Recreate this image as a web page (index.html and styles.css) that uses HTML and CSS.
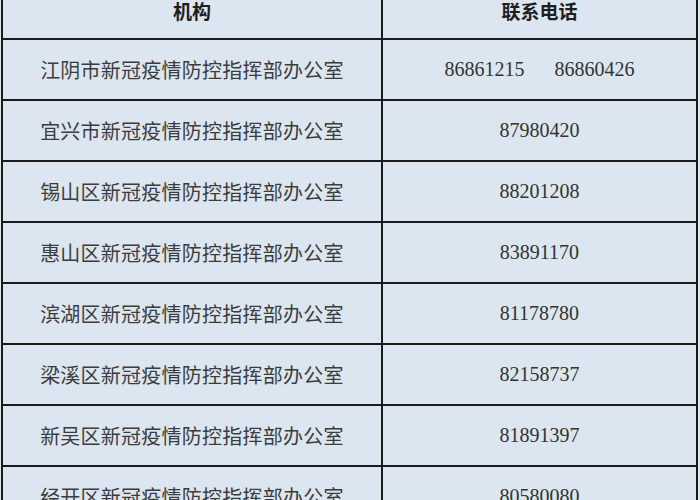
FILE: index.html
```html
<!DOCTYPE html>
<html lang="zh">
<head>
<meta charset="utf-8">
<link rel="stylesheet" href="styles.css">
</head>
<body>
<table class="contacts">
  <thead>
    <tr><th class="org">机构</th><th class="tel">联系电话</th></tr>
  </thead>
  <tbody>
    <tr><td>江阴市新冠疫情防控指挥部办公室</td><td class="num">86861215&nbsp;&nbsp;&nbsp;&nbsp;&nbsp;&nbsp;86860426</td></tr>
    <tr><td>宜兴市新冠疫情防控指挥部办公室</td><td class="num">87980420</td></tr>
    <tr><td>锡山区新冠疫情防控指挥部办公室</td><td class="num">88201208</td></tr>
    <tr><td>惠山区新冠疫情防控指挥部办公室</td><td class="num">83891170</td></tr>
    <tr><td>滨湖区新冠疫情防控指挥部办公室</td><td class="num">81178780</td></tr>
    <tr><td>梁溪区新冠疫情防控指挥部办公室</td><td class="num">82158737</td></tr>
    <tr><td>新吴区新冠疫情防控指挥部办公室</td><td class="num">81891397</td></tr>
    <tr><td>经开区新冠疫情防控指挥部办公室</td><td class="num">80580080</td></tr>
  </tbody>
</table>
</body>
</html>
```

FILE: styles.css
```css
html, body {
  margin: 0;
  padding: 0;
  background: #dfe7ef;
  overflow: hidden;
}

.contacts {
  border-collapse: collapse;
  width: 697px;
  margin: -21px 0 0 1px;
  background: #dce6f0;
  font-family: "Liberation Serif", "Noto Sans CJK SC", serif;
  font-size: 20px;
  color: #3a3a3a;
  table-layout: fixed;
}

.contacts th,
.contacts td {
  border: 2px solid #1b1b1b;
  height: 61px;
  padding: 0;
  text-align: center;
  vertical-align: middle;
  box-sizing: border-box;
}

.contacts th {
  font-family: "Noto Sans CJK SC", sans-serif;
  font-weight: 700;
  color: #1e1e1e;
  font-size: 19px;
  height: 59px;
  padding-top: 2px;
}

.contacts .org {
  width: 380px;
}

.contacts td {
  font-family: "Noto Sans CJK SC", sans-serif;
  font-weight: 400;
  font-size: 20px;
  letter-spacing: 0.25px;
  color: #3c3c3c;
}

.contacts td.num {
  font-family: "Liberation Serif", serif;
  font-size: 20px;
  letter-spacing: 0;
  color: #333;
}
```
